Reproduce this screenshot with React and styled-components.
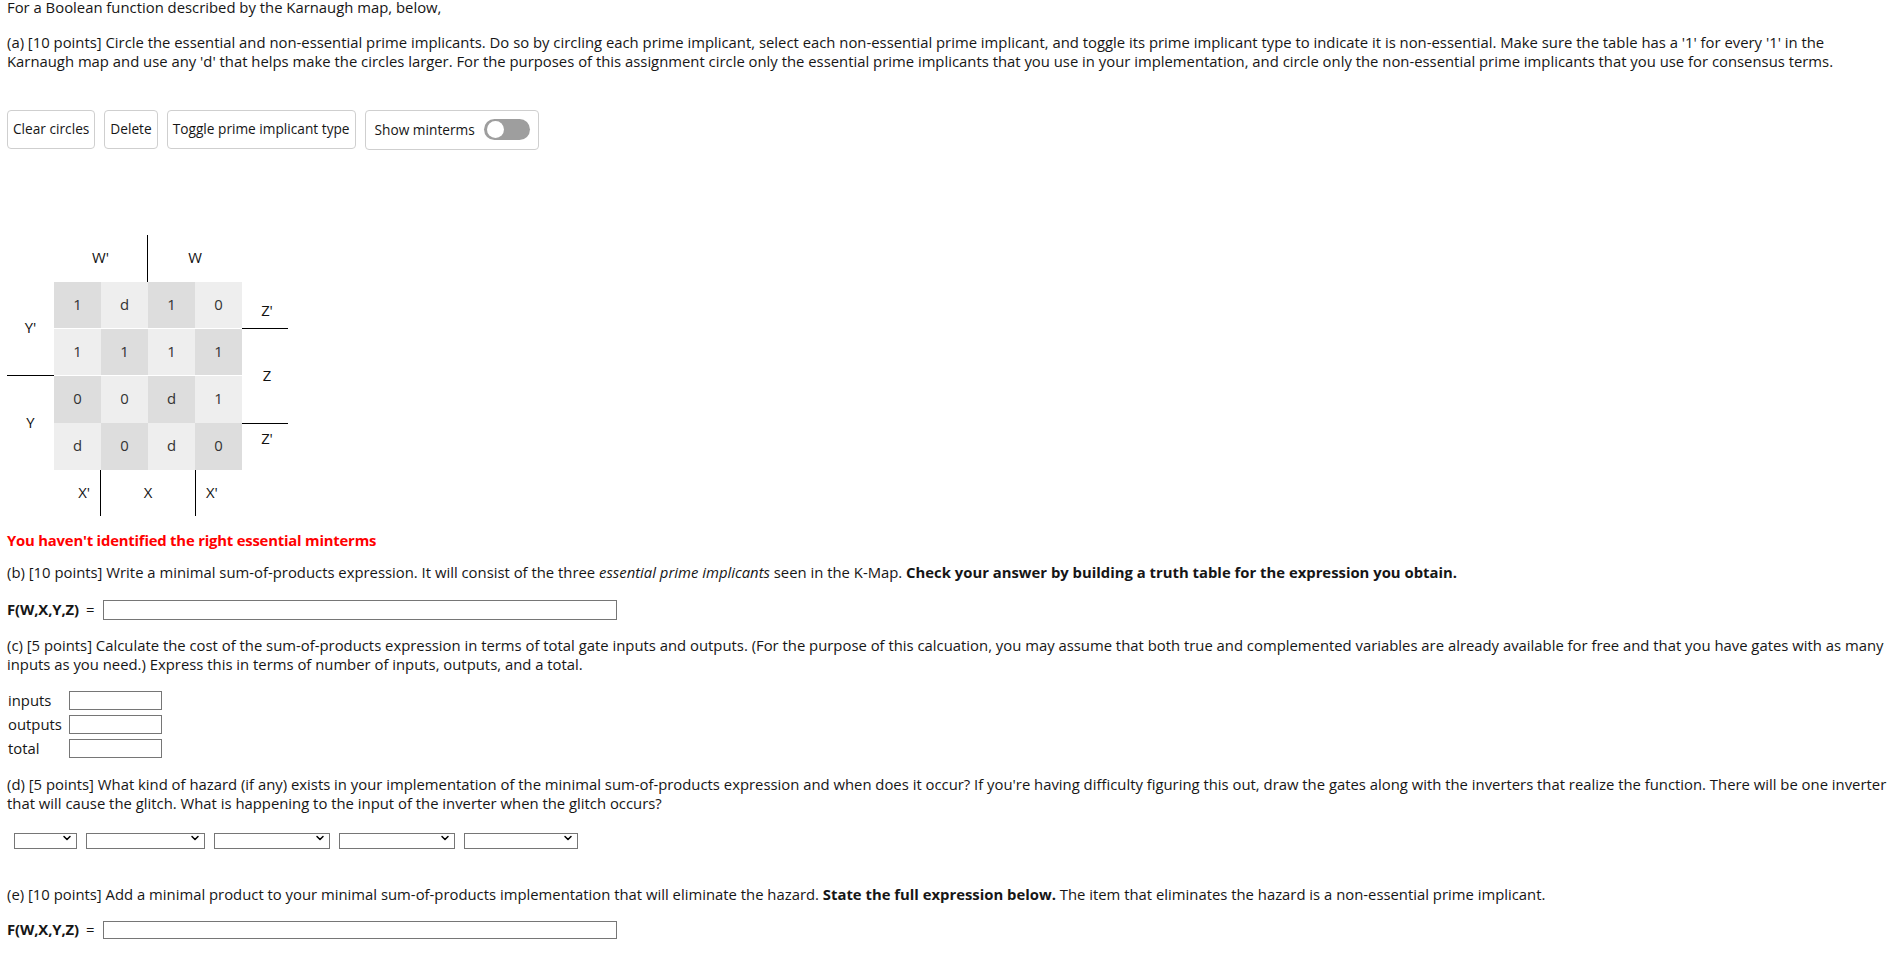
import React from 'react'
import styled, { createGlobalStyle } from 'styled-components'
import { ChevronDown } from 'lucide-react'

const GlobalStyle = createGlobalStyle`
  html, body {
    margin: 0;
    padding: 0;
    background: #fff;
  }
  body {
    font-family: "Open Sans", "Noto Sans", sans-serif;
    font-size: 14.85px;
    line-height: 19.5px;
    color: #161616;
  }
  * { box-sizing: border-box; }
`;

const Page = styled.div`
  display: flex;
  flex-direction: column;
  padding: 0 8px 0 7px;
`;

const Para = styled.p`
  margin: ${p => p.$mt ?? 15}px 0 0;
`;

const Warning = styled(Para)`
  color: #f00;
  font-weight: 700;
  letter-spacing: -0.2px;
`;

const ButtonBar = styled.div`
  display: flex;
  gap: 9px;
  margin-top: 38px;
`;

const Button = styled.button`
  height: 39px;
  padding: 0 5px;
  background: #fff;
  border: 1px solid #cfcfcf;
  border-radius: 4px;
  font: inherit;
  font-size: 13.7px;
  color: inherit;
`;

const ToggleBox = styled.label`
  display: flex;
  align-items: center;
  gap: 9px;
  height: 40px;
  padding: 0 8px 0 9px;
  border: 1px solid #cfcfcf;
  border-radius: 4px;
  font-size: 13.7px;
`;

const Track = styled.span`
  position: relative;
  width: 46px;
  height: 21px;
  border-radius: 11px;
  background: #9e9e9e;
`;

const Knob = styled.span`
  position: absolute;
  left: 3px;
  top: 2px;
  width: 17px;
  height: 17px;
  border-radius: 50%;
  background: #fff;
`;

const KMap = styled.div`
  display: grid;
  grid-template-columns: repeat(5, 47px) 46px;
  grid-template-rows: repeat(5, 47px) 46px;
  margin: 85px 0 0;
  color: #111;
`;

const Mark = styled.div`
  grid-row: ${p => p.$row};
  grid-column: ${p => p.$col};
  display: flex;
  justify-content: ${p => p.$justify || 'center'};
  align-items: ${p => p.$align || 'center'};
  padding: ${p => p.$pad || '0'};
  border-right: ${p => (p.$right ? '1px solid #000' : 'none')};
  border-left: ${p => (p.$left ? '1px solid #000' : 'none')};
  border-bottom: ${p => (p.$bottom ? '1px solid #000' : 'none')};
  border-top: ${p => (p.$top ? '1px solid #000' : 'none')};
`;

const Cell = styled.div`
  grid-row: ${p => p.$row};
  grid-column: ${p => p.$col};
  display: flex;
  align-items: center;
  justify-content: center;
  background: ${p => (p.$dark ? '#dddddd' : '#eeeeee')};
  box-shadow: ${p => (p.$sep ? 'inset 0 -1px 0 #fff' : 'none')};
  color: #333;
`;

const FormulaRow = styled.div`
  display: flex;
  align-items: center;
  margin-top: ${p => p.$mt}px;
`;

const FnName = styled.b`
  font-weight: 700;
  letter-spacing: -0.1px;
`;

const Equals = styled.span`
  margin: 0 8px 0 7px;
`;

const TextField = styled.input`
  width: ${p => p.$w}px;
  height: ${p => p.$h}px;
  margin: 0;
  padding: 0 2px;
  border: 1px solid #767676;
  background: #fff;
  font: inherit;
`;

const CostTable = styled.div`
  display: grid;
  grid-template-columns: 61px 93px;
  grid-auto-rows: 24px;
  align-items: center;
  margin-top: 14px;
  padding-left: 1px;
`;

const SelectRow = styled.div`
  display: flex;
  gap: 9px;
  margin-top: 16px;
  padding-left: 7px;
`;

const SelectWrap = styled.div`
  position: relative;
  width: ${p => p.$w}px;
  height: 16px;
`;

const Select = styled.select`
  appearance: none;
  width: 100%;
  height: 100%;
  border: 1px solid #767676;
  border-radius: 0;
  background: #fff;
  padding: 0 2px;
  font-size: 11px;
`;

const Arrow = styled(ChevronDown)`
  position: absolute;
  right: 4px;
  top: 2px;
  pointer-events: none;
  color: #000;
`;

const grid = [
  ['1', 'd', '1', '0'],
  ['1', '1', '1', '1'],
  ['0', '0', 'd', '1'],
  ['d', '0', 'd', '0'],
];

const selectWidths = [63, 119, 116, 116, 114];

export default function App() {
  return (
    <>
      <GlobalStyle />
      <Page>
        <Para $mt={-2}>For a Boolean function described by the Karnaugh map, below,</Para>
        <Para $mt={15}>
          (a) [10 points] Circle the essential and non-essential prime implicants. Do so by circling each prime
          implicant, select each non-essential prime implicant, and toggle its prime implicant type to indicate it
          is non-essential. Make sure the table has a '1' for every '1' in the<br />
          Karnaugh map and use any 'd' that helps make the circles larger. For the purposes of this assignment
          circle only the essential prime implicants that you use in your implementation, and circle only the
          non-essential prime implicants that you use for consensus terms.
        </Para>

        <ButtonBar>
          <Button>Clear circles</Button>
          <Button>Delete</Button>
          <Button>Toggle prime implicant type</Button>
          <ToggleBox>
            Show minterms
            <Track>
              <Knob />
            </Track>
          </ToggleBox>
        </ButtonBar>

        <KMap>
          <Mark $row="1" $col="2 / span 2" $right>W'</Mark>
          <Mark $row="1" $col="4 / span 2">W</Mark>
          <Mark $row="2 / span 2" $col="1" $bottom>Y'</Mark>
          <Mark $row="4 / span 2" $col="1">Y</Mark>
          <Mark $row="2" $col="6" $bottom $align="flex-end" $pad="0 0 7px 4px">Z'</Mark>
          <Mark $row="3 / span 2" $col="6" $pad="0 0 0 4px">Z</Mark>
          <Mark $row="5" $col="6" $top $align="flex-start" $pad="5px 0 0 4px">Z'</Mark>
          <Mark $row="6" $col="2" $right $justify="flex-end" $pad="0 10px 0 0">X'</Mark>
          <Mark $row="6" $col="3 / span 2">X</Mark>
          <Mark $row="6" $col="5" $left $justify="flex-start" $pad="0 0 0 10px">X'</Mark>
          {grid.map((row, r) =>
            row.map((v, c) => (
              <Cell
                key={`${r}-${c}`}
                $row={r + 2}
                $col={c + 2}
                $dark={(r + c) % 2 === 0}
                $sep={r < 2}
              >
                {v}
              </Cell>
            ))
          )}
        </KMap>

        <Warning $mt={15}>You haven't identified the right essential minterms</Warning>
        <Para $mt={13}>
          (b) [10 points] Write a minimal sum-of-products expression. It will consist of the three{' '}
          <i>essential prime implicants</i> seen in the K-Map.{' '}
          <b>Check your answer by building a truth table for the expression you obtain.</b>
        </Para>
        <FormulaRow $mt={17}>
          <FnName>F(W,X,Y,Z)</FnName>
          <Equals>=</Equals>
          <TextField $w={514} $h={20} />
        </FormulaRow>

        <Para $mt={16}>
          (c) [5 points] Calculate the cost of the sum-of-products expression in terms of total gate inputs and
          outputs. (For the purpose of this calcuation, you may assume that both true and complemented variables
          are already available for free and that you have gates with as many<br />
          inputs as you need.) Express this in terms of number of inputs, outputs, and a total.
        </Para>
        <CostTable>
          <span>inputs</span>
          <TextField $w={93} $h={19} />
          <span>outputs</span>
          <TextField $w={93} $h={19} />
          <span>total</span>
          <TextField $w={93} $h={19} />
        </CostTable>

        <Para $mt={14}>
          (d) [5 points] What kind of hazard (if any) exists in your implementation of the minimal sum-of-products
          expression and when does it occur? If you're having difficulty figuring this out, draw the gates along
          with the inverters that realize the function. There will be one inverter<br />
          that will cause the glitch. What is happening to the input of the inverter when the glitch occurs?
        </Para>
        <SelectRow>
          {selectWidths.map((w, i) => (
            <SelectWrap key={i} $w={w}>
              <Select defaultValue="">
                <option value=""></option>
              </Select>
              <Arrow size={12} strokeWidth={3} />
            </SelectWrap>
          ))}
        </SelectRow>

        <Para $mt={39}>
          (e) [10 points] Add a minimal product to your minimal sum-of-products implementation that will eliminate
          the hazard. <b>State the full expression below.</b> The item that eliminates the hazard is a
          non-essential prime implicant.
        </Para>
        <FormulaRow $mt={16}>
          <FnName>F(W,X,Y,Z)</FnName>
          <Equals>=</Equals>
          <TextField $w={514} $h={18} />
        </FormulaRow>
      </Page>
    </>
  )
}
